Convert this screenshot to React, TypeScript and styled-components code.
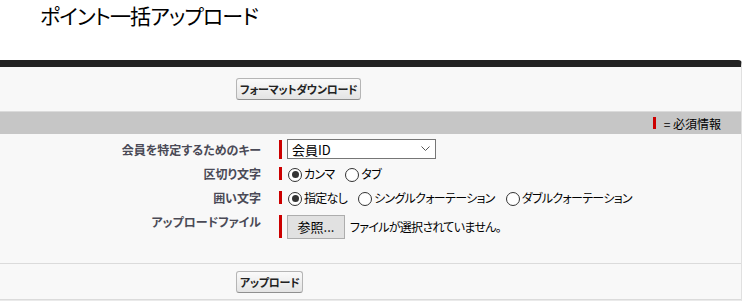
import styled, { createGlobalStyle } from 'styled-components'

const GlobalStyle = createGlobalStyle`
  body {
    margin: 0;
    background: #ffffff;
    font-family: "Noto Sans CJK JP", "Liberation Sans", sans-serif;
    font-feature-settings: "palt";
    color: #000000;
  }
`

const Page = styled.div`
  width: 748px;
  height: 301px;
  overflow: hidden;
`

const Title = styled.h1`
  margin: 0;
  height: 60px;
  padding: 0 0 0 40px;
  box-sizing: border-box;
  font-size: 21px;
  line-height: 30px;
  letter-spacing: -0.9px;
  font-weight: 400;
  color: #000000;
`

const Panel = styled.div`
  margin-left: -2px;
  width: 744px;
  box-sizing: border-box;
  background: #f8f8f8;
  border-top: 7px solid #222222;
  border-left: 1px solid #e0e0e0;
  border-right: 1px solid #e0e0e0;
  border-bottom: 1px solid #eaeaea;
  border-top-right-radius: 4px;
`

const ButtonBar = styled.div<{ $top: number; $bottom: number }>`
  display: flex;
  padding: ${p => p.$top}px 0 ${p => p.$bottom}px 237px;
  border-bottom: 1px solid #dbdbdb;
`

const Button = styled.button`
  height: 22px;
  padding: 0 3px;
  font-family: inherit;
  font-feature-settings: "palt";
  font-size: 11px;
  font-weight: 700;
  letter-spacing: -0.3px;
  color: #222222;
  background: linear-gradient(#fafafa, #e4e4e4);
  border: 1px solid #b5b5b5;
  border-bottom-color: #8f8f8f;
  border-radius: 3px;
`

const SectionHeader = styled.div`
  display: flex;
  justify-content: flex-end;
  align-items: center;
  height: 22px;
  padding-right: 20px;
  background: #c6c6c6;
`

const Legend = styled.span`
  display: flex;
  align-items: center;
  gap: 8px;
  font-size: 12px;
  color: #000000;
  &::before {
    content: '';
    width: 3px;
    height: 12px;
    background: #cc0000;
  }
`

const Body = styled.div`
  display: flex;
  flex-direction: column;
  gap: 8px;
  padding: 6px 0 25px;
  border-bottom: 1px solid #dbdbdb;
`

const Row = styled.div<{ $after?: number }>`
  display: grid;
  grid-template-columns: 262px 1fr;
  column-gap: 18px;
  align-items: start;
  padding-bottom: ${p => p.$after ?? 0}px;
`

const Label = styled.div<{ $pad: number }>`
  padding-top: ${p => p.$pad}px;
  text-align: right;
  font-size: 12px;
  line-height: 13px;
  font-weight: 700;
  color: #4a4a56;
`

const Required = styled.div<{ $h: number }>`
  display: flex;
  align-items: center;
  height: ${p => p.$h}px;
  padding-left: 5px;
  border-left: 3px solid #cc0000;
  font-size: 12px;
  letter-spacing: -0.7px;
  color: #000000;
`

const SelectBox = styled.div`
  display: flex;
  align-items: center;
  justify-content: space-between;
  width: 149px;
  height: 20px;
  margin-top: -1px;
  padding: 0 5px 0 4px;
  box-sizing: border-box;
  background: #ffffff;
  border: 1px solid #767676;
  font-size: 13px;
  letter-spacing: 0;
  color: #000000;
`

const RadioGroup = styled.label`
  display: flex;
  align-items: center;
  margin-right: 10px;
  white-space: nowrap;
`

const RadioDot = styled.span<{ $on: boolean }>`
  position: relative;
  top: 1px;
  width: 12px;
  height: 12px;
  margin: 0 2px 0 1px;
  border: 1px solid #333333;
  border-radius: 50%;
  background: #ffffff;
  display: flex;
  align-items: center;
  justify-content: center;
  &::after {
    content: '';
    display: ${p => (p.$on ? 'block' : 'none')};
    width: 7px;
    height: 7px;
    border-radius: 50%;
    background: #333333;
  }
`

const FileButton = styled.button`
  height: 24px;
  width: 58px;
  padding: 0;
  margin-right: 5px;
  font-family: inherit;
  font-size: 13px;
  color: #000000;
  background: #e1e1e1;
  border: 1px solid #adadad;
`

function Radio({ on, children }: { on: boolean; children: string }) {
  return (
    <RadioGroup>
      <RadioDot $on={on} />
      {children}
    </RadioGroup>
  )
}

export default function App() {
  return (
    <Page>
      <GlobalStyle />
      <Title>ポイント一括アップロード</Title>
      <Panel>
        <ButtonBar $top={11} $bottom={11}>
          <Button>フォーマットダウンロード</Button>
        </ButtonBar>
        <SectionHeader>
          <Legend>= 必須情報</Legend>
        </SectionHeader>
        <Body>
          <Row>
            <Label $pad={3}>会員を特定するためのキー</Label>
            <Required $h={19}>
              <SelectBox>
                会員ID
                <svg width="9" height="6" viewBox="0 0 9 6">
                  <polyline points="0.5,0.5 4.5,4.5 8.5,0.5" fill="none" stroke="#555" strokeWidth="1" />
                </svg>
              </SelectBox>
            </Required>
          </Row>
          <Row $after={3}>
            <Label $pad={0}>区切り文字</Label>
            <Required $h={13}>
              <Radio on>カンマ</Radio>
              <Radio on={false}>タブ</Radio>
            </Required>
          </Row>
          <Row $after={3}>
            <Label $pad={0}>囲い文字</Label>
            <Required $h={13}>
              <Radio on>指定なし</Radio>
              <Radio on={false}>シングルクォーテーション</Radio>
              <Radio on={false}>ダブルクォーテーション</Radio>
            </Required>
          </Row>
          <Row>
            <Label $pad={0}>アップロードファイル</Label>
            <Required $h={23}>
              <FileButton>参照...</FileButton>
              ファイルが選択されていません。
            </Required>
          </Row>
        </Body>
        <ButtonBar $top={7} $bottom={6}>
          <Button>アップロード</Button>
        </ButtonBar>
      </Panel>
    </Page>
  )
}
